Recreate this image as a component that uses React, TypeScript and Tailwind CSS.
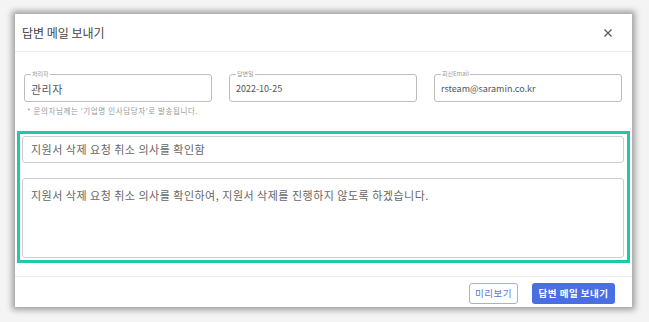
import React from "react";

const font = { fontFamily: '"Noto Sans CJK KR", "Noto Sans", sans-serif' };

function Field({ label, value, big }: { label: string; value: string; big?: boolean }) {
  return (
    <div className="relative w-[188px] h-[28px] rounded-[3px] border border-[#bdbdbd] flex items-center px-[6px]">
      <span className="absolute left-[6px] top-[-6px] bg-white px-[1px] text-[6px] leading-[10px] text-[#999]">{label}</span>
      <span className={big ? "text-[11px] text-[#555] leading-none mt-[3px] tracking-[0.5px]" : "text-[9px] text-[#555] leading-none mt-[1px]"}>{value}</span>
    </div>
  );
}

export default function App() {
  return (
    <div className="w-[649px] h-[322px] bg-[#f4f4f4] pt-[14px] pl-[15px]" style={font}>
      <div className="w-[617px] h-[293px] bg-white flex flex-col shadow-[0_0_6px_3px_rgba(0,0,0,0.35)]">
        <div className="h-[38px] flex items-center justify-between border-b border-[#ececec] pl-[7px] pr-[20px]">
          <span className="text-[12px] text-[#444]">답변 메일 보내기</span>
          <svg width="8" height="8" viewBox="0 0 8 8" className="text-[#555]">
            <path d="M0.5 0.5 L7.5 7.5 M7.5 0.5 L0.5 7.5" stroke="currentColor" strokeWidth="1.2" />
          </svg>
        </div>
        <div className="pt-[22px] px-[9px] flex gap-[17px]">
          <Field label="처리자" value="관리자" big />
          <Field label="답변일" value="2022-10-25" />
          <Field label="회신Email" value="rsteam@saramin.co.kr" />
        </div>
        <div className="pl-[12px] pt-[4px] text-[7.5px] leading-[10px] text-[#999] tracking-[0.6px]">* 문의자님께는 '기업명 인사담당자'로 발송됩니다.</div>
        <div className="mx-[2px] mt-[15px] border-[3px] border-[#1ec8a8] p-[2px] pr-[3px] flex flex-col gap-[15px]">
          <div className="h-[27px] rounded-[3px] border border-[#cfcfcf] flex items-center px-[8px] text-[11px] text-[#666] tracking-[0.5px]">
            지원서 삭제 요청 취소 의사를 확인함
          </div>
          <div className="h-[80px] rounded-[3px] border border-[#cfcfcf] px-[8px] pt-[9px] text-[11px] leading-[14px] text-[#666] tracking-[0.5px]">
            지원서 삭제 요청 취소 의사를 확인하여, 지원서 삭제를 진행하지 않도록 하겠습니다.
          </div>
        </div>
        <div className="mt-[13px] border-t border-[#ececec] flex justify-end gap-[14px] pt-[6px] pr-[17px]">
          <button className="h-[21px] w-[49px] rounded-[3px] border border-[#9fb0ea] text-[9.5px] text-[#5a77dd] tracking-[0.5px] flex items-center justify-center">미리보기</button>
          <button className="h-[21px] w-[83px] rounded-[3px] bg-[#4a6fe3] text-[9.5px] font-bold text-white tracking-[0.5px] flex items-center justify-center">답변 메일 보내기</button>
        </div>
      </div>
    </div>
  );
}
